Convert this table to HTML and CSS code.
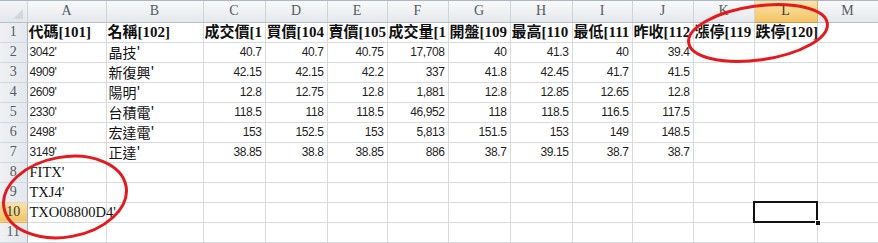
FILE: index.html
```html
<!DOCTYPE html>
<html lang="zh-Hant">
<head>
<meta charset="utf-8">
<title>Sheet</title>
<link rel="stylesheet" href="styles.css">
</head>
<body>
<div class="sheet">
  <table class="grid">
    <colgroup>
      <col class="c-rh"><col class="c-a"><col class="c-b"><col class="c-62"><col class="c-62"><col class="c-60"><col class="c-61"><col class="c-62"><col class="c-62"><col class="c-60"><col class="c-61"><col class="c-61"><col class="c-63"><col class="c-61">
    </colgroup>
    <thead>
      <tr class="colhead">
        <th class="corner"><svg class="tri" width="10" height="10" viewBox="0 0 10 10"><polygon points="10,0 10,10 0,10" fill="#d3d7dc"/></svg></th>
        <th>A</th><th>B</th><th>C</th><th>D</th><th>E</th><th>F</th><th>G</th><th>H</th><th>I</th><th>J</th><th>K</th><th class="hsel">L</th><th>M</th>
      </tr>
    </thead>
    <tbody>
      <tr class="hdr">
        <th class="rh">1</th>
        <td>代碼[101]</td><td>名稱[102]</td><td>成交價[1</td><td>買價[104</td><td>賣價[105</td><td>成交量[1</td><td>開盤[109</td><td>最高[110</td><td>最低[111</td><td>昨收[112</td><td>漲停[119</td><td class="ov">跌停[120]</td><td></td>
      </tr>
      <tr>
        <th class="rh">2</th>
        <td class="code">3042'</td><td class="name">晶技'</td><td class="n">40.7</td><td class="n">40.7</td><td class="n">40.75</td><td class="n">17,708</td><td class="n">40</td><td class="n">41.3</td><td class="n">40</td><td class="n">39.4</td><td></td><td></td><td></td>
      </tr>
      <tr>
        <th class="rh">3</th>
        <td class="code">4909'</td><td class="name">新復興'</td><td class="n">42.15</td><td class="n">42.15</td><td class="n">42.2</td><td class="n">337</td><td class="n">41.8</td><td class="n">42.45</td><td class="n">41.7</td><td class="n">41.5</td><td></td><td></td><td></td>
      </tr>
      <tr>
        <th class="rh">4</th>
        <td class="code">2609'</td><td class="name">陽明'</td><td class="n">12.8</td><td class="n">12.75</td><td class="n">12.8</td><td class="n">1,881</td><td class="n">12.8</td><td class="n">12.85</td><td class="n">12.65</td><td class="n">12.8</td><td></td><td></td><td></td>
      </tr>
      <tr>
        <th class="rh">5</th>
        <td class="code">2330'</td><td class="name">台積電'</td><td class="n">118.5</td><td class="n">118</td><td class="n">118.5</td><td class="n">46,952</td><td class="n">118</td><td class="n">118.5</td><td class="n">116.5</td><td class="n">117.5</td><td></td><td></td><td></td>
      </tr>
      <tr>
        <th class="rh">6</th>
        <td class="code">2498'</td><td class="name">宏達電'</td><td class="n">153</td><td class="n">152.5</td><td class="n">153</td><td class="n">5,813</td><td class="n">151.5</td><td class="n">153</td><td class="n">149</td><td class="n">148.5</td><td></td><td></td><td></td>
      </tr>
      <tr>
        <th class="rh">7</th>
        <td class="code">3149'</td><td class="name">正達'</td><td class="n">38.85</td><td class="n">38.8</td><td class="n">38.85</td><td class="n">886</td><td class="n">38.7</td><td class="n">39.15</td><td class="n">38.7</td><td class="n">38.7</td><td></td><td></td><td></td>
      </tr>
      <tr>
        <th class="rh">8</th>
        <td class="sym">FITX'</td><td></td><td></td><td></td><td></td><td></td><td></td><td></td><td></td><td></td><td></td><td></td><td></td>
      </tr>
      <tr>
        <th class="rh">9</th>
        <td class="sym">TXJ4'</td><td></td><td></td><td></td><td></td><td></td><td></td><td></td><td></td><td></td><td></td><td></td><td></td>
      </tr>
      <tr>
        <th class="rh rsel">10</th>
        <td class="sym ov">TXO08800D4'</td><td></td><td></td><td></td><td></td><td></td><td></td><td></td><td></td><td></td><td></td><td class="sel"></td><td></td>
      </tr>
      <tr>
        <th class="rh">11</th>
        <td></td><td></td><td></td><td></td><td></td><td></td><td></td><td></td><td></td><td></td><td></td><td></td><td></td>
      </tr>
    </tbody>
  </table>
  <svg class="marks" viewBox="0 0 878 243" width="878" height="243">
    <ellipse cx="758" cy="33" rx="70" ry="27" transform="rotate(-8 758 33)" fill="none" stroke="#e51a1f" stroke-width="3"/>
    <ellipse cx="65" cy="197" rx="62" ry="40" transform="rotate(-10 65 197)" fill="none" stroke="#e51a1f" stroke-width="3"/>
  </svg>
</div>
</body>
</html>
```
FILE: styles.css
```css
html, body {
  margin: 0;
  padding: 0;
  background: #ffffff;
  overflow: hidden;
}

.sheet {
  position: relative;
  width: 878px;
  height: 243px;
  border-top: 1px solid #aeb6bf;
  box-sizing: border-box;
  overflow: hidden;
}

.grid {
  table-layout: fixed;
  border-collapse: collapse;
  width: 878px;
  font-family: "Liberation Sans", "Noto Sans CJK TC", sans-serif;
  font-size: 12px;
  color: #1f1f1f;
}

.c-rh { width: 27px; }
.c-a { width: 79px; }
.c-b { width: 97px; }
.c-60 { width: 60px; }
.c-61 { width: 61px; }
.c-62 { width: 62px; }
.c-63 { width: 63px; }

.grid tbody tr { height: 20px; }
.grid thead tr { height: 21px; }

.grid th,
.grid td {
  padding: 0 2px;
  white-space: nowrap;
  overflow: hidden;
  line-height: 18px;
}

.grid td {
  border: 1px solid #d9dadb;
  border-top: none;
  border-left: none;
  text-align: left;
  vertical-align: middle;
}

.colhead th {
  font-family: "Liberation Serif", serif;
  font-weight: normal;
  font-size: 14px;
  color: #555b62;
  text-align: center;
  background: linear-gradient(#f8f9fa, #e5e8ec);
  border-right: 1px solid #cfd4da;
  border-bottom: 1px solid #b6bec7;
}

.colhead .corner {
  position: relative;
  padding: 0;
  background: linear-gradient(#f3f4f6, #e4e7eb);
}

.corner .tri {
  position: absolute;
  right: 4px;
  bottom: 3px;
}

.colhead .hsel {
  background: linear-gradient(#fbe3a6, #f2c466);
  border-right-color: #d8b060;
  border-bottom-color: #c89c47;
  color: #3a3a3a;
}

.rh {
  font-family: "Liberation Serif", serif;
  font-weight: normal;
  font-size: 14px;
  color: #555b62;
  text-align: center;
  background: linear-gradient(90deg, #eef0f3, #e4e8ec);
  border-right: 1px solid #a8b3bf;
  border-bottom: 1px solid #d2d7dd;
}

.rh.rsel {
  background: linear-gradient(#fbe3a6, #f2c466);
  border-bottom-color: #d8b060;
  color: #3a3a3a;
}

.hdr td {
  font-family: "Liberation Serif", "Noto Sans CJK TC", serif;
  font-weight: bold;
  font-size: 15px;
  color: #111;
  padding-left: 1px;
}

.code {
  letter-spacing: -0.4px;
}

.name {
  font-size: 14px;
  font-family: "Noto Sans CJK TC", sans-serif;
  font-weight: 400;
  color: #111;
  padding-left: 1px;
}

.grid td.n {
  text-align: right;
  padding-right: 3px;
  letter-spacing: -0.4px;
}

.sym {
  font-family: "Liberation Serif", serif;
  font-size: 14.5px;
  color: #111;
}

.grid td.ov {
  overflow: visible;
}

.grid td.sel {
  position: relative;
  overflow: visible;
  outline: 2px solid #111;
  outline-offset: -1px;
}

.grid td.sel::after {
  content: "";
  position: absolute;
  right: -4px;
  bottom: -4px;
  width: 6px;
  height: 6px;
  background: #111;
  border: 1px solid #fff;
  box-sizing: border-box;
}

.marks {
  position: absolute;
  left: 0;
  top: -1px;
  pointer-events: none;
}
```
